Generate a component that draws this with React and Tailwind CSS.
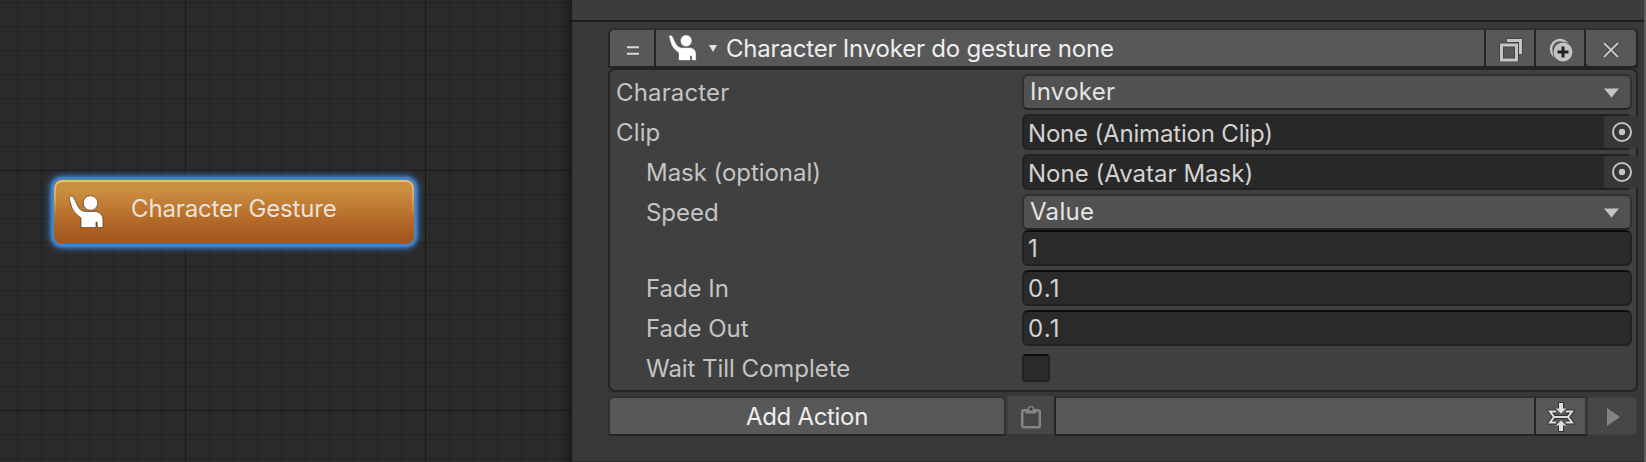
function Gesture({ className, outline = "#5a3a1a" }) {
  return (
    <svg viewBox="0 0 36 34" className={className}>
      <path
        d="M1 3 Q3 -.5 5.500 2 L10 11.500 Q12.500 16.500 18 16.500 L28 16.500 Q34.500 18 35 24 L35 32.500 L29.500 32.500 L29 27 L28 27 L28 32.500 L13 32.500 L13 23 Q6 18 4 13 Z"
        fill="#fff" stroke={outline} strokeWidth="0.700" strokeLinejoin="round"
      />
      <circle cx="22.500" cy="8" r="7.300" fill="#fff" stroke={outline} strokeWidth="0.700" />
    </svg>
  );
}

function Graph() {
  return (
    <div className="relative h-full w-[571px] shrink-0 overflow-hidden bg-[#2a2a2a]">
      <svg className="absolute inset-0 h-full w-full" shapeRendering="crispEdges">
        <defs>
          <pattern id="minor" x="17" y="2" width="24" height="24" patternUnits="userSpaceOnUse">
            <path d="M0 0H24V1H1V24H0Z" fill="#222222" />
          </pattern>
          <pattern id="major" x="185" y="170" width="240" height="240" patternUnits="userSpaceOnUse">
            <path d="M0 0H240V1H1V240H0Z" fill="#191919" />
          </pattern>
        </defs>
        <rect width="100%" height="100%" fill="url(#minor)" />
        <rect width="100%" height="100%" fill="url(#major)" />
      </svg>
      <div className="absolute inset-y-0 right-0 w-[14px] bg-linear-to-r from-transparent to-black/25" />
      <div className="absolute left-[54px] top-[180px] flex h-[64px] w-[360px] items-start rounded-[8px] bg-linear-to-b from-[#cb8f40] from-[15%] via-[#b8702c] via-[55%] to-[#a4571e] to-[92%] pl-[14px] shadow-[0_0_3px_3px_#4787d0,0_0_7px_4px_#3d7cc4]">
        <div className="absolute inset-0 rounded-[8px] border-2 border-[#e6bd80] mask-b-from-0% mask-b-to-60%" />
        <Gesture className="mt-[15px] h-[34px] w-[36px]" />
        <span className="ml-[27px] mt-[11px] whitespace-nowrap tracking-[-0.14px] text-[#ebe2d8]">Character Gesture</span>
      </div>
    </div>
  );
}

function Dropdown({ value }) {
  return (
    <div className="flex h-[36px] w-[610px] items-center justify-between rounded-[6px] border-2 border-[#303030] border-b-[#242424] bg-[#515151] pl-[6px] pr-[11px] tracking-[0.28px] text-[#e4e4e4]">
      <span>{value}</span>
      <svg className="mt-[2px] h-[10px] w-[15px]" viewBox="0 0 15 10"><path d="M0 0.500H15L7.500 9.500Z" fill="#c4c4c4" /></svg>
    </div>
  );
}

function ObjectField({ value, className = "" }) {
  return (
    <div className={"relative h-[36px] w-[610px] shrink-0 rounded-[6px] border-2 border-[#202020] bg-[#282828] pl-[4px] leading-[35px] text-[#d2d2d2] " + className}>
      {value}
      <div className="absolute left-[580px] top-0 flex h-[32px] w-[35px] items-center rounded-[4px] bg-[#373737] pl-[8px]">
        <svg className="h-[20px] w-[20px]" viewBox="0 0 20 20">
          <circle cx="10" cy="10" r="9" fill="none" stroke="#c4c4c4" strokeWidth="2" />
          <circle cx="10" cy="10" r="3.200" fill="#c4c4c4" />
        </svg>
      </div>
    </div>
  );
}

function NumberField({ value }) {
  return (
    <div className="h-[36px] w-[610px] rounded-[6px] border-2 border-[#212121] border-t-[#0d0d0d] bg-[#2a2a2a] pl-[4px] leading-[34px] tracking-[1.2px] text-[#d2d2d2]">{value}</div>
  );
}

function Row({ label, indent, tight, children }) {
  return (
    <div className={"flex h-[36px] " + (tight ? "" : "mt-[4px]")}>
      <div className={"w-[412px] shrink-0 whitespace-nowrap pt-px text-[#c4c4c4] " + (indent ? "pl-[36px] tracking-[-0.05px]" : "pl-[6px] tracking-[0.15px]")}>{label}</div>
      {children}
    </div>
  );
}

function Header() {
  const cell = "flex h-[36px] items-center justify-center bg-[#585858] ";
  return (
    <div className="flex h-[40px] w-[1030px] gap-[2px] overflow-hidden rounded-t-[6px] border-2 border-[#242424] border-t-[#303030] bg-[#242424]">
      <div className={cell + "w-[44px] rounded-tl-[4px]"}>
        <svg className="ml-[2px] mt-[4px] h-[9px] w-[12px]" viewBox="0 0 12 9"><path d="M0 1.250H12M0 7.750H12" stroke="#d8d8d8" strokeWidth="2.200" /></svg>
      </div>
      <div className="flex h-[36px] w-[828px] items-center bg-[#585858] pl-[12px] text-[#eee]">
        <Gesture outline="#444444" className="h-[28px] w-[29px]" />
        <svg className="ml-[12px] h-[7px] w-[8px]" viewBox="0 0 8 7"><path d="M0 0H8L4 7Z" fill="#e4e4e4" /></svg>
        <span className="ml-[9px] mt-[2px] whitespace-nowrap tracking-[-0.2px]">Character Invoker do gesture none</span>
      </div>
      <div className={cell + "w-[48px]"}>
        <svg className="mt-[3px] ml-[2px] h-[24px] w-[24px]" viewBox="0 0 24 24" fill="none">
          <path d="M7.500 2.500H21.500V16.500M2.500 7H17.500V22H2.500Z" stroke="#444" strokeWidth="5" />
          <path d="M8 2.500H21.500V16" stroke="#c4c4c4" strokeWidth="3" />
          <path d="M2.500 7H17.500V22H2.500Z" stroke="#c4c4c4" strokeWidth="3" />
        </svg>
      </div>
      <div className={cell + "w-[48px]"}>
        <svg className="mt-[3px] ml-[2px] h-[24px] w-[24px]" viewBox="0 0 24 24">
          <circle cx="11" cy="11" r="9" fill="none" stroke="#c4c4c4" strokeWidth="2.500" />
          <circle cx="14" cy="14" r="10.300" fill="#505050" />
          <circle cx="14" cy="14" r="9.500" fill="#c4c4c4" />
          <path d="M14 8.500V19.500M8.500 14H19.500" stroke="#222" strokeWidth="3" />
        </svg>
      </div>
      <div className={cell + "w-[50px] rounded-b-[4px] rounded-tr-[4px]"}>
        <svg className="mt-[4px] h-[16px] w-[16px]" viewBox="0 0 16 16">
          <path d="M1 1L15 15M15 1L1 15" stroke="#444" strokeWidth="4" />
          <path d="M1 1L15 15M15 1L1 15" stroke="#c4c4c4" strokeWidth="2" />
        </svg>
      </div>
    </div>
  );
}

function Footer() {
  return (
    <div className="mt-[4px] flex h-[40px] w-[1030px]">
      <div className="flex h-[40px] w-[398px] items-center justify-center rounded-t-[6px] border-2 border-[#303030] border-b-[#242424] bg-[#585858] pt-[2px] tracking-[-0.3px] text-[#eee]">
        Add Action
      </div>
      <div className="flex h-[38px] w-[48px] items-center justify-center border-l-2 border-[#3e3e3e] bg-[#464646]">
        <svg className="mt-[3px] h-[24px] w-[20px]" viewBox="0 0 20 24" fill="none">
          <rect x="1.250" y="5.250" width="17.500" height="17" rx="1.500" stroke="#848484" strokeWidth="2.500" />
          <path d="M4.500 8.500V4.500H6.500A3.500 3.500 0 0 1 13.500 4.500H15.500V8.500Z" fill="#848484" />
          <circle cx="10" cy="4" r="1.700" fill="#3a3a3a" />
        </svg>
      </div>
      <div className="h-[40px] w-[482px] border-2 border-[#242424] border-t-[#303030] bg-[#585858]" />
      <div className="flex h-[40px] w-[52px] items-center justify-center border-y-2 border-r-[3px] border-[#242424] border-r-[#383838] border-t-[#303030] bg-[#585858]">
        <svg className="mt-px h-[30px] w-[28px]" viewBox="0 0 28 30">
          <g fill="none" stroke="#333" strokeWidth="4">
            <path d="M9 9.500H3L7 15H21L25 9.500H19M9 20.500H3L7 15M21 15L25 20.500H19" />
            <path d="M14 0V8M14 22V30" strokeWidth="6" />
          </g>
          <path d="M9 9.500H3L7 15L3 20.500H9M19 9.500H25L21 15L25 20.500H19M7 15H21" fill="none" stroke="#dedede" strokeWidth="2" />
          <path d="M12 1H16V6.500H19L14 11.500L9 6.500H12ZM12 29H16V23.500H19L14 18.500L9 23.500H12Z" fill="#dedede" />
        </svg>
      </div>
      <div className="flex h-[40px] w-[50px] items-center rounded-r-[6px] border-2 border-l-0 border-[#3c3c3c] bg-[#474747] pl-[19px]">
        <svg className="mt-[2px] h-[18px] w-[13px]" viewBox="0 0 13 18"><path d="M0 0L13 9L0 18Z" fill="#848484" /></svg>
      </div>
    </div>
  );
}

export default function App() {
  return (
    <div className="flex h-[462px] w-[1646px] overflow-hidden bg-[#383838] font-['Inter',sans-serif] text-[24px] leading-[36px]">
      <Graph />
      <div className="flex h-full grow flex-col border-l border-[#191919]">
        <div className="h-[22px] shrink-0 border-b-2 border-[#1c1c1c] bg-[#3c3c3c]" />
        <div className="flex grow flex-col border-b border-[#2b2b2b] pl-[36px] pt-[6px]">
          <Header />
          <div className="h-[324px] w-[1030px] rounded-[7px] border-2 border-[#242424] bg-[#404040]">
            <Row label="Character"><Dropdown value="Invoker" /></Row>
            <Row label="Clip"><ObjectField value="None (Animation Clip)" className="tracking-[-0.18px]" /></Row>
            <Row label="Mask (optional)" indent><ObjectField value="None (Avatar Mask)" className="tracking-[0.02px]" /></Row>
            <Row label="Speed" indent><Dropdown value="Value" /></Row>
            <Row label="" tight><NumberField value="1" /></Row>
            <Row label="Fade In" indent><NumberField value="0.1" /></Row>
            <Row label="Fade Out" indent><NumberField value="0.1" /></Row>
            <Row label="Wait Till Complete" indent>
              <div className="mt-[4px] h-[28px] w-[28px] rounded-[4px] border-2 border-[#212121] border-t-[#0d0d0d] bg-[#2a2a2a]" />
            </Row>
          </div>
          <Footer />
        </div>
      </div>
      <div className="h-full w-[2px] shrink-0 bg-[#5a5a5a]" />
    </div>
  );
}
